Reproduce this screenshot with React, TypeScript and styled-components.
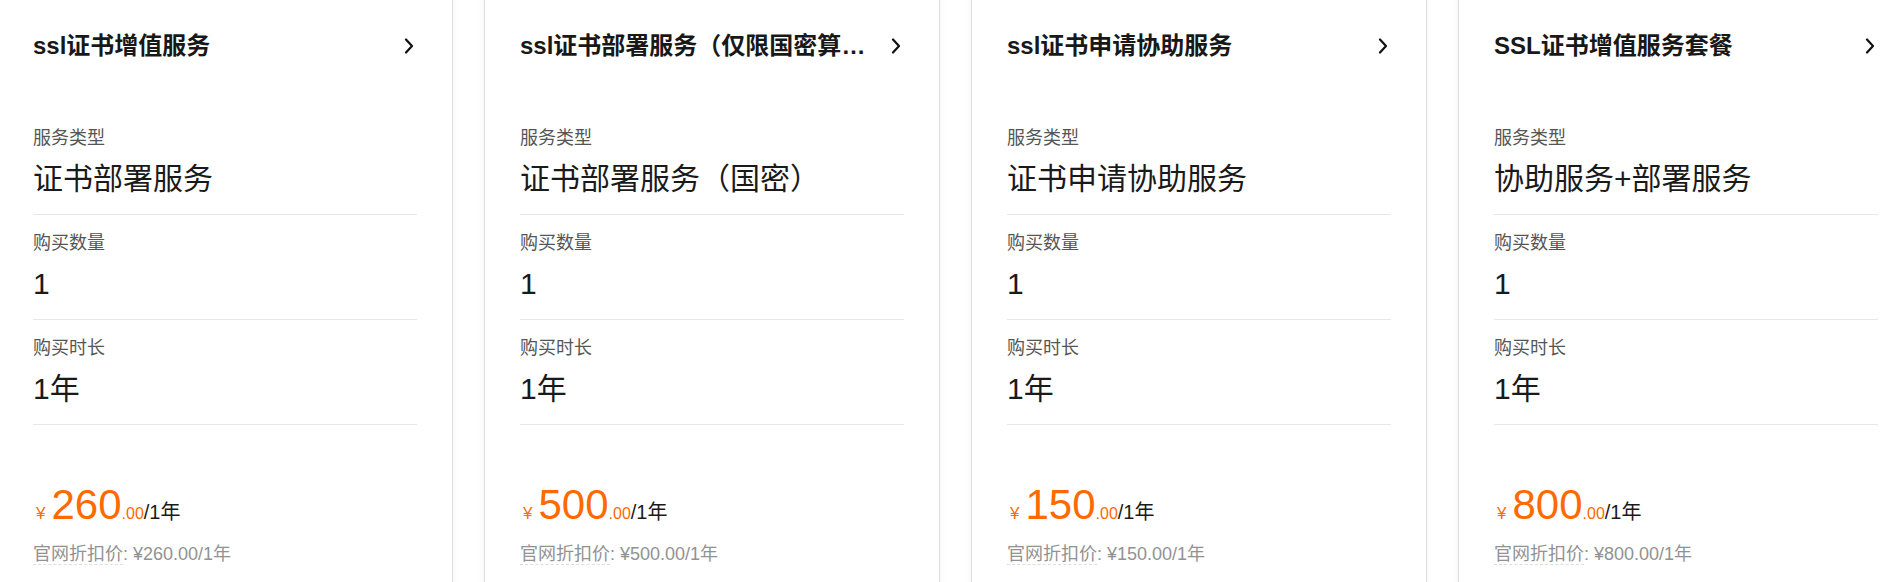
import React from "react";
import styled, { createGlobalStyle } from "styled-components";

const GlobalStyle = createGlobalStyle`
  html, body {
    margin: 0;
    padding: 0;
    background: #ffffff;
    overflow: hidden;
  }
  body {
    font-family: "Liberation Sans", "Noto Sans CJK SC", sans-serif;
    color: #181818;
  }
`;

const Viewport = styled.div`
  width: 1897px;
  height: 582px;
  overflow: hidden;
  background: #ffffff;
`;

const Track = styled.div`
  display: flex;
  gap: 31px;
  margin: -20px 0 0 -3px;
`;

const Card = styled.div`
  flex: 0 0 456px;
  width: 456px;
  min-width: 0;
  box-sizing: border-box;
  padding: 0 35px 60px;
  border: 1px solid #dedede;
  box-shadow: 0 0 6px rgba(0, 0, 0, 0.06);
  background: #ffffff;
`;

const Head = styled.div`
  display: flex;
  align-items: center;
  gap: 14px;
  padding: 49px 0 48px;
`;

const Title = styled.h3`
  flex: 1;
  min-width: 0;
  margin: 0;
  font-size: 24px;
  line-height: 32px;
  font-weight: 700;
  color: #181818;
  white-space: nowrap;
  overflow: hidden;
  text-overflow: ellipsis;
`;

const Arrow = styled.svg`
  flex: 0 0 16px;
  width: 16px;
  height: 16px;
`;

const Row = styled.div`
  padding: 16px 0 14px;
  border-bottom: 1px solid #e8e8e8;
`;

const Label = styled.div`
  font-size: 18px;
  line-height: 24px;
  color: #555555;
`;

const Value = styled.div`
  margin-top: 8px;
  font-size: 30px;
  line-height: 42px;
  color: #1a1a1a;
`;

const PriceBlock = styled.div`
  padding-top: 56px;
`;

const PriceLine = styled.div`
  display: flex;
  align-items: baseline;
  line-height: 48px;
  color: #ff6a00;
`;

const Yen = styled.span`
  font-size: 17px;
  padding: 0 6px 0 3px;
`;

const Amount = styled.span`
  font-size: 42px;
`;

const Cents = styled.span`
  font-size: 16px;
`;

const Unit = styled.span`
  font-size: 20px;
  color: #1a1a1a;
`;

const Discount = styled.div`
  margin-top: 4px;
  font-size: 18px;
  line-height: 24px;
  color: #929292;
`;

const Dotted = styled.span`
  border-bottom: 1px dashed #dddddd;
`;

type Plan = {
  title: string;
  type: string;
  count: string;
  duration: string;
  price: string;
};

const plans: Plan[] = [
  { title: "ssl证书增值服务", type: "证书部署服务", count: "1", duration: "1年", price: "260" },
  { title: "ssl证书部署服务（仅限国密算法证书）", type: "证书部署服务（国密）", count: "1", duration: "1年", price: "500" },
  { title: "ssl证书申请协助服务", type: "证书申请协助服务", count: "1", duration: "1年", price: "150" },
  { title: "SSL证书增值服务套餐", type: "协助服务+部署服务", count: "1", duration: "1年", price: "800" },
];

const ChevronRight = () => (
  <Arrow viewBox="0 0 16 16" fill="none">
    <path d="M5 1.5 L11 8 L5 14.5" stroke="#111" strokeWidth="2.2" strokeLinecap="round" strokeLinejoin="round" />
  </Arrow>
);

const PlanCard = ({ plan }: { plan: Plan }) => (
  <Card>
    <Head>
      <Title title={plan.title}>{plan.title}</Title>
      <ChevronRight />
    </Head>
    <Row>
      <Label>服务类型</Label>
      <Value>{plan.type}</Value>
    </Row>
    <Row>
      <Label>购买数量</Label>
      <Value>{plan.count}</Value>
    </Row>
    <Row>
      <Label>购买时长</Label>
      <Value>{plan.duration}</Value>
    </Row>
    <PriceBlock>
      <PriceLine>
        <Yen>¥</Yen>
        <Amount>{plan.price}</Amount>
        <Cents>.00</Cents>
        <Unit>/1年</Unit>
      </PriceLine>
      <Discount>
        <Dotted>官网折扣价</Dotted>: ¥{plan.price}.00/1年
      </Discount>
    </PriceBlock>
  </Card>
);

const App = () => (
  <Viewport>
    <GlobalStyle />
    <Track>
      {plans.map((p) => (
        <PlanCard key={p.title} plan={p} />
      ))}
    </Track>
  </Viewport>
);

export default App;
